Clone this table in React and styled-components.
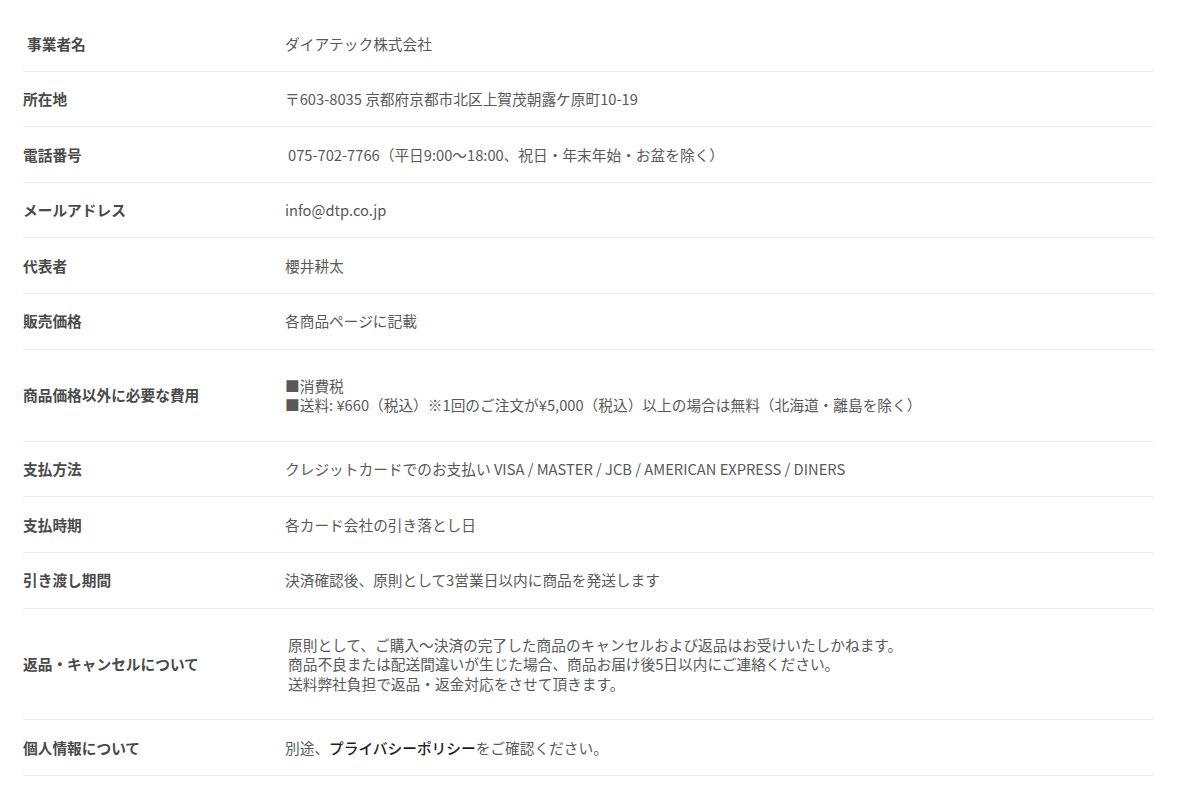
import React from 'react';
import styled, { createGlobalStyle } from 'styled-components';

const GlobalStyle = createGlobalStyle`
  body {
    margin: 0;
    background: #fff;
    font-family: "Noto Sans CJK JP", "Noto Sans", sans-serif;
  }
`;

const Page = styled.div`
  padding: 16px 26px 0 23px;
`;

const Table = styled.dl`
  margin: 0;
  width: 1131px;
`;

const Row = styled.div`
  display: grid;
  grid-template-columns: 262px 1fr;
  align-items: center;
  padding: ${p => (p.tall ? '26px' : '17.5px')} 0;
  border-bottom: 1px solid #ececec;
  font-size: 14.7px;
  line-height: 19.6px;
`;

const Label = styled.dt`
  margin: 0;
  padding-left: ${p => p.indent || 0}px;
  font-weight: 700;
  color: #4a4a4a;
`;

const Value = styled.dd`
  margin: 0;
  padding-left: ${p => p.indent || 0}px;
  color: #595959;
`;

const Link = styled.a`
  color: #1e1e1e;
  font-weight: 500;
  text-decoration: none;
`;

const rows = [
  { label: '事業者名', value: 'ダイアテック株式会社', labelIndent: 4 },
  { label: '所在地', value: '〒603-8035 京都府京都市北区上賀茂朝露ケ原町10-19' },
  { label: '電話番号', value: '075-702-7766（平日9:00〜18:00、祝日・年末年始・お盆を除く）', valueIndent: 3 },
  { label: 'メールアドレス', value: 'info@dtp.co.jp' },
  { label: '代表者', value: '櫻井耕太' },
  { label: '販売価格', value: '各商品ページに記載' },
  {
    label: '商品価格以外に必要な費用',
    tall: true,
    value: [
      '■消費税',
      '■送料: ¥660（税込）※1回のご注文が¥5,000（税込）以上の場合は無料（北海道・離島を除く）'
    ]
  },
  { label: '支払方法', value: 'クレジットカードでのお支払い VISA / MASTER / JCB / AMERICAN EXPRESS / DINERS' },
  { label: '支払時期', value: '各カード会社の引き落とし日' },
  { label: '引き渡し期間', value: '決済確認後、原則として3営業日以内に商品を発送します' },
  {
    label: '返品・キャンセルについて',
    tall: true,
    valueIndent: 3,
    value: [
      '原則として、ご購入〜決済の完了した商品のキャンセルおよび返品はお受けいたしかねます。',
      '商品不良または配送間違いが生じた場合、商品お届け後5日以内にご連絡ください。',
      '送料弊社負担で返品・返金対応をさせて頂きます。'
    ]
  }
];

const renderLines = value =>
  Array.isArray(value)
    ? value.map((line, i) => (
        <React.Fragment key={i}>
          {i > 0 && <br />}
          {line}
        </React.Fragment>
      ))
    : value;

const App = () => (
  <Page>
    <GlobalStyle />
    <Table>
      {rows.map(row => (
        <Row key={row.label} tall={row.tall}>
          <Label indent={row.labelIndent}>{row.label}</Label>
          <Value indent={row.valueIndent}>{renderLines(row.value)}</Value>
        </Row>
      ))}
      <Row>
        <Label>個人情報について</Label>
        <Value>
          別途、<Link href="#">プライバシーポリシー</Link>をご確認ください。
        </Value>
      </Row>
    </Table>
  </Page>
);

export default App;
